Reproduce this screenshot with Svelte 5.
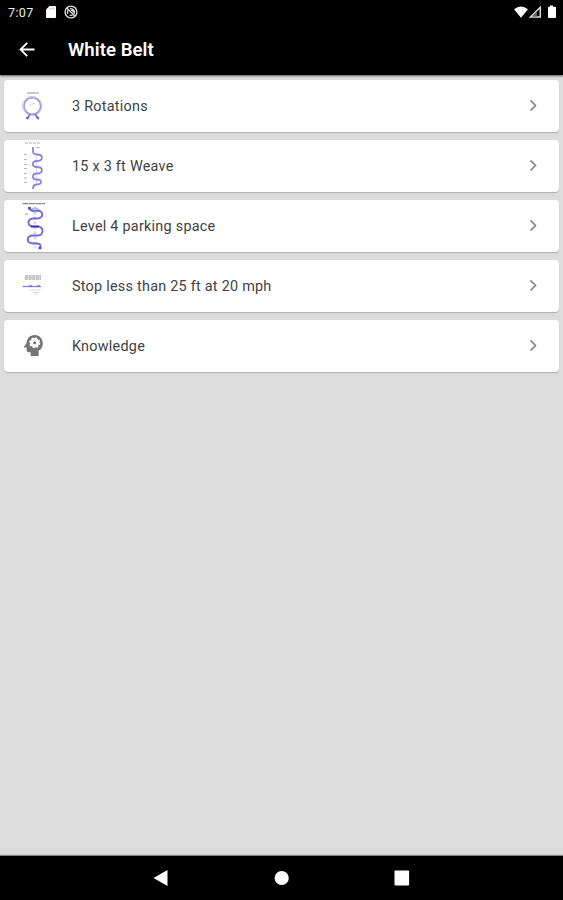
<script lang="ts">
	type Drill = { id: string; title: string };

	const drills: Drill[] = [
		{ id: 'rotations', title: '3 Rotations' },
		{ id: 'weave', title: '15 x 3 ft Weave' },
		{ id: 'parking', title: 'Level 4 parking space' },
		{ id: 'stop', title: 'Stop less than 25 ft at 20 mph' },
		{ id: 'knowledge', title: 'Knowledge' }
	];
</script>

<div class="screen">
	<header>
		<div class="status">
			<span class="time">7:07</span>
			<svg class="sd" width="10" height="12" viewBox="0 0 10 12">
				<path d="M3.5 0H9q1 0 1 1v10q0 1-1 1H1q-1 0-1-1V3.5z" fill="#fff" />
				<path d="M4 1.6v1.8M6 1.6v1.8M8 1.6v1.8" stroke="#999" stroke-width=".7" />
			</svg>
			<svg width="14" height="14" viewBox="0 0 14 14" fill="none" stroke="#ddd">
				<circle cx="7" cy="7" r="5.9" stroke-width="1.4" />
				<path d="M2.8 3l8.4 8.2M4 8.8a3.5 3.5 0 0 1 .3-4M6 3.7a3.5 3.5 0 0 1 4 5M5.5 10a3.5 3.5 0 0 0 3 .1M7 5.3h2v2" stroke-width="1.3" />
			</svg>
			<svg class="signals" width="43" height="14" viewBox="0 0 43 14" fill="#fff">
				<path d="M1 4.2Q8 -1.2 15 4.2L8 12.7z" />
				<path d="M27.3 2.3v9.7H17.5z" fill="none" stroke="#ddd" stroke-width="1.5" />
				<path d="M24 6v5.5h-5z" fill="#666" />
				<path d="M37 .5h3v1.2h2q1 0 1 1V12q0 1-1 1h-6q-1 0-1-1V2.7q0-1 1-1h1z" />
			</svg>
		</div>
		<div class="appbar">
			<button aria-label="Back">
				<svg width="16" height="16" viewBox="0 0 16 16" fill="none" stroke="#fff" stroke-width="1.8">
					<path d="M15.5 7.5H2M8.2.8L1.5 7.5l6.7 6.7" />
				</svg>
			</button>
			<h1>White Belt</h1>
		</div>
	</header>

	<main>
		{#each drills as drill (drill.id)}
			<div class="card">
				<svg class="thumb" width="56" height="52" viewBox="0 .5 56 52" fill="none">
					{#if drill.id === 'rotations'}
						<path d="M23 13.5h12" stroke="#aaa" stroke-width="1.2" />
						<circle cx="28.3" cy="26.5" r="9.6" stroke="#c8c8cc" stroke-width="1" />
						<circle cx="28.3" cy="26.5" r="8.3" stroke="#9b96e6" stroke-width="1.5" />
						<path d="M25.5 26l2-1.3M28.5 24.6l2.5-1" stroke="#ccc" />
						<path d="M26 34.5l-2 3.5M31 34.5l2.5 3.5" stroke="#7772da" stroke-width="1.5" />
						<path d="M21.5 38l4.5-1-2.5 3.2zM35.5 38l-4.5-1 3.5 3.2z" fill="#5a52cf" />
					{:else if drill.id === 'weave'}
						<path d="M21 3.5h16" stroke="#aaa" stroke-width="1.2" stroke-dasharray="3 1" />
						<path d="M32 8h4M20 15h3M20 20h3M20 25h3M20 29h3M20 34h3M20 38.5h3M20 43h3" stroke="#bbb" stroke-width="1.2" />
						<path d="M26 15v3M26 24v3M26 32v3M32.5 13v32" stroke="#ddd" />
						<path
							d="M29 7.5v4q0 3.500 4 3.500c6.500 0 6.500 6.500 0 6.500-5.500 0-5.500 6 0 6 6.500 0 6.500 6.500 0 6.500-5.500 0-5.500 6 0 6 6 0 5 5 0 5q-4 0-4 4.500"
							stroke="#8b85df"
							stroke-width="1.8"
						/>
					{:else if drill.id === 'parking'}
						<path d="M18.5 4.2H41" stroke="#888" stroke-width="1.3" stroke-dasharray="6 .5" />
						<path d="M31 7v42" stroke="#ddd" stroke-width="3" stroke-dasharray="3 2" />
						<path d="M21 14.7h3" stroke="#b9b59d" stroke-width="1.3" />
						<ellipse cx="31" cy="10.5" rx="4" ry="2" stroke="#aaa8d8" />
						<path
							d="M25 8.5c2 4 5 2.5 8 2.5 7 0 7 8 0 8h-4c-6 0-6 8 0 8h5c6 0 6 9 0 9h-5c-7 0-7 8 0 8h4c4 0 4 2 3 5"
							stroke="#7069dc"
							stroke-width="1.9"
						/>
						<path d="M27 27h8" stroke="#342dae" stroke-width="1.6" />
						<path d="M24 8.7h3M34.5 48.5h3" stroke="#5952cd" stroke-width="2.3" />
					{:else if drill.id === 'stop'}
						<path d="M21 16.5h16M21 19.5h16" stroke="#888" stroke-width="1.2" stroke-dasharray="3 .6" />
						<path d="M20 18h17" stroke="#ccc" />
						<path d="M18.5 27H37" stroke="#8984de" stroke-width="1.3" />
						<path d="M25 26.7h3M33 26.7h3" stroke="#6a64c8" stroke-width="1.6" />
						<path d="M25 30.5h12M29 33h6M31 35h2" stroke="#ddd" />
					{:else}
						<path
							d="M31 15.500c-5.200 0-8.200 3.600-8.400 8l-2.600 3.700q-.3.800.6.900h2v2.700q0 2 2 2h2V36.500h8v-5.200a8.400 8.400 0 0 0 4.200-7.300c0-5-3.600-8.500-7.800-8.500z"
							fill="#757575"
						/>
						<circle cx="30.7" cy="23.3" r="4.7" fill="#fff" />
						<circle cx="30.7" cy="23.3" r="4.8" stroke="#fff" stroke-width="1.5" stroke-dasharray="1.9 1.87" />
						<circle cx="30.7" cy="23.3" r="1.5" fill="#757575" />
					{/if}
				</svg>
				<span class="title">{drill.title}</span>
				<svg class="chevron" width="8" height="12" viewBox="0 .5 8 12" fill="none" stroke="#858585" stroke-width="1.7">
					<path d="M1.5 1l5 5-5 5" />
				</svg>
			</div>
		{/each}
	</main>

	<nav>
		<svg width="563" height="44" viewBox="0 0 563 44" fill="#fff">
			<path d="M153.5 22L167.5 14v16z" />
			<circle cx="281.7" cy="22" r="7.1" />
			<rect x="394.5" y="14.5" width="14.6" height="15" rx="1" />
		</svg>
	</nav>
</div>

<style>
	:global(body) {
		margin: 0;
	}
	.screen {
		display: flex;
		flex-direction: column;
		width: 563px;
		height: 900px;
		background: #dcdcdc;
		font-family: Roboto, sans-serif;
	}
	header {
		height: 75px;
		background: #000;
		color: #fff;
		box-shadow: 0 1px 2px rgba(0, 0, 0, 0.6);
	}
	.status {
		display: flex;
		align-items: center;
		height: 24px;
		padding: 0 7px 0 8px;
		box-sizing: border-box;
	}
	.time {
		width: 38px;
		font-size: 12.5px;
		letter-spacing: 0.4px;
		color: #eee;
	}
	.sd {
		margin-right: 8px;
	}
	.signals {
		margin-left: auto;
	}
	.appbar {
		display: flex;
		align-items: center;
		height: 51px;
	}
	button {
		display: flex;
		width: 49px;
		margin-left: 19px;
		padding: 0;
		border: 0;
		background: none;
	}
	h1 {
		margin: 0;
		font-size: 18.6px;
		font-weight: 600;
		letter-spacing: 0.05px;
	}
	main {
		flex: 1;
		display: flex;
		flex-direction: column;
		gap: 8px;
		padding: 5px 4px;
	}
	.card {
		display: flex;
		align-items: center;
		height: 52px;
		background: #fff;
		border-radius: 4px;
		box-shadow: 0 1px 1px rgba(0, 0, 0, 0.2);
	}
	.thumb {
		margin-right: 12px;
	}
	.title {
		flex: 1;
		font-size: 14.4px;
		letter-spacing: 0.25px;
		color: #424242;
	}
	.chevron {
		margin-right: 22px;
	}
	nav {
		height: 44px;
		background: #000;
		box-shadow: 0 -1px 1px rgba(0, 0, 0, 0.4);
	}
	nav svg {
		display: block;
	}
</style>
